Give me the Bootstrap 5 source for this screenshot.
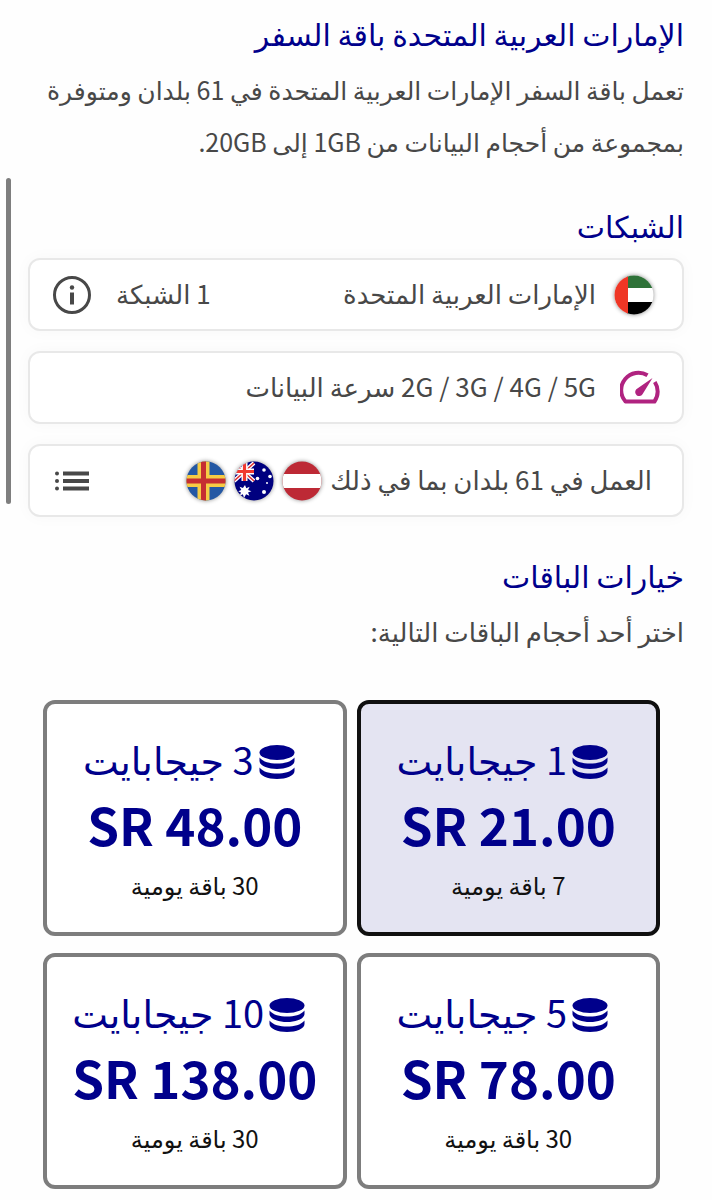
<!DOCTYPE html>
<html lang="ar" dir="rtl">
<head>
<meta charset="utf-8">
<meta name="viewport" content="width=device-width, initial-scale=1">
<title>باقة السفر</title>
<link href="https://cdn.jsdelivr.net/npm/bootstrap@5.3.0/dist/css/bootstrap.min.css" rel="stylesheet">
<style>
:root { --navy: #00008b; --ink: #484848; }
body { font-family: "Noto Sans CJK SC", "DejaVu Sans", sans-serif; font-size: 26px; line-height: 52px; color: var(--ink); background: #fefefe; }
.page { padding: 3px 28px 12px; }
.title { font-size: 30px; line-height: 60px; font-weight: 400; color: var(--navy); margin: 0; }
.intro { font-size: 25px; margin-bottom: 28px; }
.info-list { gap: 20px; margin: 3px 0 28px; }
.info-row { min-height: 73px; border: 2px solid #e8e8e8; border-radius: 12px; background: #fff; box-shadow: 0 0 16px rgba(0,0,0,.03); padding: 0 22px; line-height: 40px; }
.info-row svg { display: block; flex: none; }
.info-row > span { padding-bottom: 4px; }
.info-row > .flag-set { gap: 8px; padding: 0; margin: 0 8px; }
.flag { filter: drop-shadow(0 0 2px rgba(0,0,0,.45)); }
.tool { border: 0; background: none; padding: 0; color: var(--ink); }
.plans { display: grid; grid-template-columns: 1fr 1fr; gap: 17px 10px; margin-top: 43px; padding: 0 24px 0 15px; }
.plan { min-height: 236px; border: 4px solid #7d7d7d; border-radius: 12px; background: #fff; color: #111; padding: 4px 0 0; }
.plan.chosen { border-color: #101010; background: #e4e4f2; }
.plan-size { font-size: 38px; line-height: 60px; color: var(--navy); gap: 5px; padding-right: 12px; }
.plan-size svg { margin-top: 6px; }
.plan-price { font-size: 51px; line-height: 70px; font-weight: 700; color: var(--navy); }
.plan-days { font-size: 24px; line-height: 52px; }
.scroll-thumb { left: 6px; top: 178px; width: 5px; height: 326px; border-radius: 3px; background: #7e7e7e; }
</style>
</head>
<body>
<svg width="0" height="0" class="position-absolute" aria-hidden="true">
  <symbol id="disks" viewBox="0 0 36 36">
    <ellipse cx="18" cy="8.500" rx="17.500" ry="7.500"/>
    <path d="M.5 13.500C4 18 11 19.500 18 19.500S32 18 35.500 13.500V17C35.500 21.500 27.500 25 18 25S.5 21.500.5 17z"/>
    <path d="M.5 23.500C4 28 11 29.500 18 29.500S32 28 35.500 23.500V27C35.500 31.500 27.500 35 18 35S.5 31.500.5 27z"/>
  </symbol>
  <clipPath id="round"><circle cx="20" cy="20" r="19.500"/></clipPath>
</svg>
<div class="scroll-thumb position-absolute" aria-hidden="true"></div>
<main class="page">
  <h1 class="title">الإمارات العربية المتحدة باقة السفر</h1>
  <p class="intro">تعمل باقة السفر الإمارات العربية المتحدة في 61 بلدان ومتوفرة بمجموعة من أحجام البيانات من 1GB إلى 20GB.</p>

  <h2 class="title">الشبكات</h2>
  <div class="info-list d-flex flex-column">
    <div class="info-row d-flex align-items-center">
      <svg class="flag" width="48" height="40" viewBox="-2 0 48 40"><g clip-path="url(#round)"><path fill="#fff" d="M0 0h40v40H0z"/><path fill="#2e7238" d="M13 0h27v13H13z"/><path fill="#000" d="M13 27h27v13H13z"/><path fill="#ef3625" d="M0 0h14v40H0z"/></g></svg>
      <span class="mx-3">الإمارات العربية المتحدة</span>
      <span class="me-auto ms-4">1 الشبكة</span>
      <button class="tool" type="button" aria-label="معلومات"><svg width="40" height="40" viewBox="0 0 40 40"><circle cx="20" cy="20" r="17.500" fill="none" stroke="currentColor" stroke-width="3"/><circle cx="20" cy="12.500" r="2.200" fill="currentColor"/><path fill="currentColor" d="M18 17.500h4v12h-4z"/></svg></button>
    </div>
    <div class="info-row d-flex align-items-center">
      <svg width="40" height="40" viewBox="0 0 40 40"><path d="M27.500 7.300A17.300 17.300 0 0 0 5.500 33.500H34.500A17.300 17.300 0 0 0 34.800 14" fill="none" stroke="#b02380" stroke-width="4" stroke-linejoin="round"/><path fill="#b02380" d="M32.500 10 16.300 21.300a4 4 0 1 0 6.200 5z"/></svg>
      <span class="mx-4">2G / 3G / 4G / 5G سرعة البيانات</span>
    </div>
    <div class="info-row d-flex align-items-center">
      <span class="me-2">العمل في 61 بلدان بما في ذلك</span>
      <span class="flag-set d-flex">
        <svg class="flag" width="40" height="40" viewBox="0 0 40 40"><g clip-path="url(#round)"><path fill="#bd2935" d="M0 0h40v40H0z"/><path fill="#fff" d="M0 13h40v14H0z"/></g></svg>
        <svg class="flag" width="40" height="40" viewBox="0 0 40 40"><g clip-path="url(#round)"><path fill="#00007f" d="M0 0h40v40H0z"/><path d="M0 2 20 20M0 20 20 2" stroke="#fff" stroke-width="4"/><path d="M0 2 20 20M0 20 20 2" stroke="#e03030" stroke-width="1.500"/><path d="M10.500 0v20M0 10.500h20" stroke="#fff" stroke-width="6"/><path d="M10.500 0v20M0 10.500h20" stroke="#f03a30" stroke-width="3.200"/><path fill="#fff" d="m11 24 1.300 3.300 3.300-1.500-1.500 3.200 3.300 1.200-3.400 1.300 1.400 3.300-3.300-1.500L10 37l-1.100-3.700-3.300 1.500 1.400-3.300-2.700-1.300 3-1.200-1.700-3.200 3.300 1.300z"/><g fill="#fff"><circle cx="30" cy="9" r="1.800"/><circle cx="23.500" cy="17.500" r="1.800"/><circle cx="36" cy="15.500" r="1.800"/><circle cx="33" cy="22" r="1"/><circle cx="30" cy="31" r="2"/></g></g></svg>
        <svg class="flag" width="40" height="40" viewBox="0 0 40 40"><g clip-path="url(#round)"><path fill="#2458a4" d="M0 0h40v40H0z"/><path d="M17.500 0v40M0 20h40" stroke="#f6cc45" stroke-width="12"/><path d="M17.500 0v40M0 20h40" stroke="#c52e32" stroke-width="5"/></g></svg>
      </span>
      <button class="tool me-auto ms-0" type="button" aria-label="قائمة البلدان"><svg width="40" height="40" viewBox="0 0 40 40" fill="currentColor"><circle cx="5" cy="12.500" r="2"/><circle cx="5" cy="20" r="2"/><circle cx="5" cy="27.500" r="2"/><path d="M11 10.500h26v4H11zM11 18h26v4H11zM11 25.500h26v4H11z"/></svg></button>
    </div>
  </div>

  <h2 class="title">خيارات الباقات</h2>
  <p class="mb-0">اختر أحد أحجام الباقات التالية:</p>
  <div class="plans">
    <button type="button" class="plan chosen" aria-pressed="true">
      <span class="plan-size d-flex justify-content-center align-items-center"><svg width="36" height="36" fill="currentColor"><use href="#disks"/></svg><span>1 جيجابايت</span></span>
      <span class="plan-price d-block" dir="ltr">SR 21.00</span>
      <span class="plan-days d-block">7 باقة يومية</span>
    </button>
    <button type="button" class="plan" aria-pressed="false">
      <span class="plan-size d-flex justify-content-center align-items-center"><svg width="36" height="36" fill="currentColor"><use href="#disks"/></svg><span>3 جيجابايت</span></span>
      <span class="plan-price d-block" dir="ltr">SR 48.00</span>
      <span class="plan-days d-block">30 باقة يومية</span>
    </button>
    <button type="button" class="plan" aria-pressed="false">
      <span class="plan-size d-flex justify-content-center align-items-center"><svg width="36" height="36" fill="currentColor"><use href="#disks"/></svg><span>5 جيجابايت</span></span>
      <span class="plan-price d-block" dir="ltr">SR 78.00</span>
      <span class="plan-days d-block">30 باقة يومية</span>
    </button>
    <button type="button" class="plan" aria-pressed="false">
      <span class="plan-size d-flex justify-content-center align-items-center"><svg width="36" height="36" fill="currentColor"><use href="#disks"/></svg><span>10 جيجابايت</span></span>
      <span class="plan-price d-block" dir="ltr">SR 138.00</span>
      <span class="plan-days d-block">30 باقة يومية</span>
    </button>
  </div>
</main>
<script src="https://cdn.jsdelivr.net/npm/bootstrap@5.3.0/dist/js/bootstrap.bundle.min.js"></script>
</body>
</html>
